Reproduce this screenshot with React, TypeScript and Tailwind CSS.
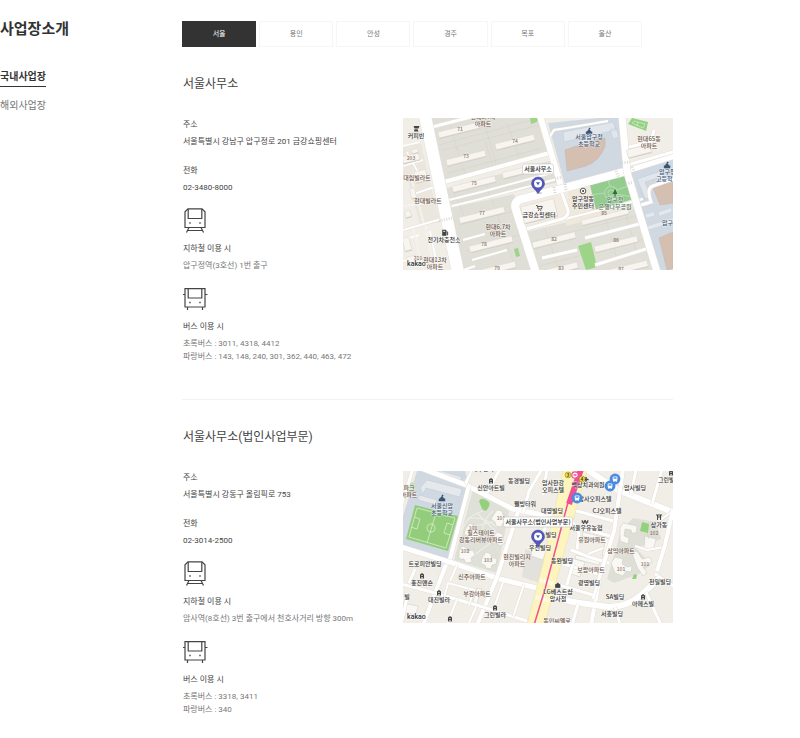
// src/pages/company/Location.tsx
import React from "react";

type Point = [x: number, y: number];

interface Office {
  id: string;
  name: string;
  address: string;
  tel: string;
  subway: string;
  bus: string[];
  map: React.ReactNode;
}

interface LabelProps {
  x: number;
  y: number;
  lines: string[];
  fill?: string;
  anchor?: "start" | "middle";
}

// Place name on a map, one <text> per line
const Label: React.FC<LabelProps> = ({
  x,
  y,
  lines,
  fill = "#333333",
  anchor = "middle",
}) => (
  <>
    {lines.map((line, index) => (
      <text
        key={index}
        x={x}
        y={y + 2 + index * 7}
        textAnchor={anchor}
        fill={fill}
        stroke="#ffffff"
        strokeWidth="1"
        strokeOpacity="0.6"
        paintOrder="stroke"
      >
        {line}
      </text>
    ))}
  </>
);

// Long apartment building, turned along the street grid
const Block: React.FC<{
  x: number;
  y: number;
  w?: number;
  h?: number;
  turn?: number;
}> = ({ x, y, w = 42, h = 6, turn = -14 }) => (
  <g transform={`rotate(${turn} ${x} ${y})`}>
    <rect x={x - w / 2} y={y - h / 2 + 1} width={w} height={h} fill="#cfccc3" />
    <rect
      x={x - w / 2}
      y={y - h / 2}
      width={w}
      height={h}
      rx="0.5"
      fill="#f8f5f0"
      stroke="#dcd9d1"
      strokeWidth="0.5"
    />
  </g>
);

const Road: React.FC<{ d: string; w?: number }> = ({ d, w = 4 }) => (
  <>
    <path d={d} fill="none" stroke="#e4e0d8" strokeWidth={w + 1} />
    <path d={d} fill="none" stroke="#ffffff" strokeWidth={w} />
  </>
);

const House: React.FC<{ at: Point; fill?: string }> = ({
  at: [x, y],
  fill = "#444444",
}) => (
  <g>
    <path d={`M${x - 2} ${y + 2.5}v-4l2 -1.500l2 1.500v4z`} fill={fill} />
    <path d={`M${x - 0.6} ${y + 2.5}v-1.500h1.200v1.500z`} fill="#ffffff" />
    <path d={`M${x - 1} ${y - 0.6}h2`} stroke="#ffffff" strokeWidth="0.6" />
  </g>
);

const School: React.FC<{ at: Point }> = ({ at: [x, y] }) => (
  <path
    d={`M${x} ${y - 3.5}l1.8 1l-1.300 1l1.400 1.500v.6h1.300v2.600h-6.400v-2.600h1.300v-.6l1.400 -1.500z`}
    fill="#3c5474"
  />
);

const Cart: React.FC<{ at: Point }> = ({ at: [x, y] }) => (
  <g stroke="#444444" fill="none" strokeWidth="0.9">
    <path d={`M${x - 3} ${y - 2.5}h1.200l1 3.500h3.200l.8 -2.600h-4.500`} />
    <path d={`M${x - 1} ${y + 2.5}h.9M${x + 1.3} ${y + 2.5}h.9`} />
  </g>
);

const BusStop: React.FC<{ at: Point }> = ({ at: [x, y] }) => (
  <g>
    <circle cx={x} cy={y} r="5.4" fill="#4a8be0" />
    <rect x={x - 2.3} y={y - 2.5} width="4.6" height="4.4" rx="0.8" fill="#fff" />
    <path d={`M${x - 1.5} ${y - 1}h3`} stroke="#4a8be0" strokeWidth="1.4" />
    <path
      d={`M${x - 1.6} ${y + 2.4}h1M${x + 0.6} ${y + 2.4}h1`}
      stroke="#fff"
      strokeWidth="1"
    />
  </g>
);

// Office marker with the name bubble above it
const Marker: React.FC<{ name: string; width: number }> = ({ name, width }) => (
  <g>
    <rect
      x={135 - width / 2}
      y="46"
      width={width}
      height="10"
      rx="2"
      fill="#ffffff"
      stroke="#c4c4c4"
      strokeWidth="0.6"
    />
    <text x="135" y="53.3" textAnchor="middle" fill="#222222">
      {name}
    </text>
    <ellipse cx="136" cy="75" rx="3" ry="1" fill="#000000" opacity="0.2" />
    <path
      d="M135 59a6.500 6.500 0 0 1 6.500 6.500c0 4-3.600 5.500-6.500 10c-2.900-4.500-6.500-6-6.500-10a6.500 6.500 0 0 1 6.500-6.500z"
      fill="#5158b8"
      stroke="#3d4399"
      strokeWidth="0.5"
    />
    <circle cx="135" cy="65.500" r="4" fill="#ffffff" />
    <path d="M133 64.300h4l-2 2.900z" fill="#5158b8" />
  </g>
);

const MapFrame: React.FC<{ title: string; children: React.ReactNode }> = ({
  title,
  children,
}) => (
  <svg
    viewBox="0 0 270 152"
    role="img"
    aria-label={title}
    className="block w-full font-['Noto_Sans_CJK_KR',sans-serif] text-[6px] font-medium"
  >
    <rect width="270" height="152" fill="#f1eee8" />
    {children}
    <text
      x="4"
      y="148"
      fill="#333333"
      stroke="#ffffff"
      strokeWidth="1"
      paintOrder="stroke"
      className="font-['Roboto',sans-serif] text-[7px] font-medium"
    >
      kakao
    </text>
  </svg>
);

const BROWN = "#6b5347";
const NAVY = "#3c5474";

const SeoulMap = () => (
  <MapFrame title="서울사무소 지도">
    {/* apartment grounds */}
    <path d="M29 0H137L149 34L35 66zM37 72L154 41L157 64L48 87z" fill="#dfdfd7" />
    <path d="M47 90L111 76L132 152H61z" fill="#dfdfd7" />
    <path d="M123 114L240 86L254 152H136z" fill="#e0e0d8" />
    <path d="M165 70L187 67L193 90L240 80V88L163 108z" fill="#efe8dc" />
    <path d="M112 82L160 72L166 98L120 110z" fill="#f1ebe1" />
    <path d="M0 28L18 25L24 52L0 58zM5 62L25 58L38 104L17 108z" fill="#ebe7df" />
    <g stroke="#cfcec6" strokeWidth="0.4" fill="none">
      <path d="M36 27l100 -27M46 2l8 30M80 0l13 46M104 5l12 34M54 30l8 26M82 23l8 25M40 32l96 -25M45 55l94 -25M52 76l9 22M83 68l8 19M56 107l55 -14M63 133l54 -16M92 91l18 52" />
      <path d="M128 124l108 -27M136 148l106 -27M142 111l14 41M202 98l12 43M222 93l13 46" />
    </g>
    <path
      d="M0 88l34 -4M0 61l22 -7M9 63l12 43M0 28l17 -4M0 48l20 -6M4 34l12 22M0 122l16 -5M10 109l10 43M22 105l9 47M27 113l8 39"
      stroke="#fff"
      strokeWidth="1.500"
      fill="none"
    />
    <path
      d="M0 88l34 -4M9 63l12 43M10 109l10 43M22 105l9 47"
      stroke="#d8d5cd"
      strokeWidth="0.4"
      fill="none"
    />

    {/* schools */}
    <path d="M145 5L216 -2L221 53L162 67z" fill="#d0d9e2" />
    <path d="M227 54L270 41V152H257z" fill="#d0d9e2" />
    <path
      d="M160 14l50 -10 3 8 -52 12zM207 12l6 -2 3 9 -6 2z"
      fill="#e0e6ec"
      stroke="#bcc8d3"
      strokeWidth="0.5"
    />
    <path
      d="M234 61l24 -8 3 5 -19 6 6 15 -6 2z"
      fill="#e0e6ec"
      stroke="#bcc8d3"
      strokeWidth="0.5"
    />
    <path
      d="M162 32L188 23L202 20V28Q197 43 183 48L164 53z"
      fill="#d5bfb1"
      stroke="#c6b5a9"
      strokeWidth="0.5"
    />
    <path
      d="M250 70L270 62V85L257 87zM256 120L270 114V150L264 152z"
      fill="#d5bfb1"
      stroke="#c6b5a9"
      strokeWidth="0.5"
    />
    <path
      d="M243 98l8 -2M245 110l25 -8M256 96l12 -4"
      stroke="#e4e9ee"
      strokeWidth="3"
    />

    {/* parks */}
    <path d="M187 67L224 57L231 81L193 92z" fill="#94cc90" />
    <g stroke="#b3dbad" strokeWidth="1" fill="none">
      <circle cx="208" cy="75" r="6.500" />
      <circle cx="208" cy="75" r="3" />
      <path d="M188 77l13 -2M214 72l14 -5M207 68l-2 -6M210 81l3 6M214 76l15 3" />
    </g>
    <path
      d="M175 128L188 124L194 149L183 152zM127 0H135L134 4L128 6zM111 131l4 -1 2 8 -4 1z"
      fill="#9dd487"
    />
    <path d="M225 6L229 0L245 4L243 13z" fill="#93d184" />
    <path
      d="M229 5l2 -2 11 3 -2 4zM235 4l-1 4"
      fill="none"
      stroke="#cfebc3"
      strokeWidth="0.8"
    />

    {/* streets */}
    <Road w={3} d="M29 9L76 -3" />
    <Road w={2} d="M0 112L38 101L45 104" />
    <Road w={2} d="M60 122L82 116M69 142L104 132M61 152L72 148M0 143L20 139" />
    <Road w={4} d="M34 66L150 34" />
    <Road w={2} d="M11 76L34 68M46 82L78 74L152 54" />
    <Road w={2} d="M49 88L78 81L154 61" />
    <Road w={2} d="M123 111L240 81" />
    <Road w={3} d="M182 120L240 105M192 147L246 130M139 140L174 132M152 153L174 146" />
    <Road w={3} d="M221 48L270 34M226 29L248 24L251 12" />
    <Road w={2} d="M149 29L146 20L151 12L170 9L205 3" />
    <Road w={3} d="M238 87L248 84Q243 70 250 68L270 61" />
    <Road w={3} d="M157 70L165 92Q166 98 159 101L123 111" />
    <Road w={6} d="M137 -2L158 68" />
    <Road w={8} d="M133 155L113 92Q110 84 118 81L157 71L224 53" />
    <Road w={5} d="M224 53L272 38" />
    <Road w={7} d="M219 -2L224 54L254 154" />
    <Road w={12} d="M22 -2L55 154" />
    <path
      d="M36 103l13 -3M213 53l3 7M229 49l3 7M219 45l8 -1M223 66l7 -2M151 69l1 6M162 66l1 6M152 61l7 -2"
      stroke="#dcd8d0"
      strokeWidth="3"
      strokeDasharray="1 1.500"
    />

    {/* buildings */}
    <Block x={56} y={12} />
    <Block x={112} y={24} w={40} />
    <Block x={63} y={40} w={40} />
    <Block x={71} y={66} w={44} />
    <Block x={118} y={53} w={38} />
    <Block x={79} y={97} w={46} />
    <Block x={88} y={126} w={44} />
    <Block x={93} y={151} w={40} />
    <Block x={8} y={40} w={17} h={7} />
    <Block x={12} y={33} w={6} h={4} />
    <Block x={18} y={58} w={12} h={11} />
    <Block x={10} y={75} w={5} h={10} />
    <Block x={5} y={96} w={6} h={6} />
    <Block x={4} y={126} w={7} h={13} />
    <Block x={9} y={142} w={9} h={8} />
    <Block x={202} y={99} w={48} h={5} />
    <Block x={151} y={122} w={44} />
    <Block x={213} y={126} w={44} />
    <Block x={158} y={151} w={34} />
    <Block x={225} y={150} w={40} />
    <Block x={236} y={33} w={24} h={8} />
    <Block x={136} y={93} w={34} h={17} />

    <Label x={80} y={-1} lines={["현대6,7차", "아파트"]} fill={BROWN} />
    <path d="M10.500 8h6l-1 2.500h-4zM11.500 11.200h3l1 2.300h-4.500z" fill="#444444" />
    <Label x={13} y={18} lines={["커피빈"]} />
    <Label x={14} y={60} lines={["대림빌라트"]} fill={BROWN} />
    <Label x={25} y={83} lines={["현대빌라트"]} fill={BROWN} />
    <path
      d="M39.500 112h3.500v5.500h-3.500zM43.500 113l1.200 1v3h-1"
      fill="#444444"
      stroke="#444444"
      strokeWidth="0.6"
    />
    <path d="M40.200 113.300h2" stroke="#ffffff" strokeWidth="0.9" />
    <Label x={41} y={122} lines={["전기차충전소"]} />
    <Label x={95} y={109} lines={["현대6,7차", "아파트"]} fill={BROWN} />
    <Label x={32} y={142} lines={["현대13차", "아파트"]} fill={BROWN} />
    <Cart at={[136, 90]} />
    <Label x={136} y={97} lines={["금강쇼핑센터"]} />
    <School at={[186, 13]} />
    <Label x={186} y={19} lines={["서울압구정", "초등학교"]} fill={NAVY} />
    <Label x={246} y={21} lines={["현대65동", "아파트"]} fill={BROWN} />
    <School at={[264, 47]} />
    <Label x={256} y={54} lines={["압구정"]} fill={NAVY} anchor="start" />
    <Label x={253} y={61} lines={["고등학교"]} fill={NAVY} anchor="start" />
    <Label x={259} y={105} lines={["압구정"]} fill={NAVY} anchor="start" />
    <circle cx="180" cy="73" r="2.800" fill="#fff" stroke="#333333" strokeWidth="0.8" />
    <circle cx="180" cy="73" r="1" fill="#333333" />
    <Label x={180} y={81} lines={["압구정동", "주민센터"]} />
    <path d="M212 71l2.500 5h-2v2.500h-1v-2.500h-2z" fill="#2f6b3c" />
    <Label x={212} y={82} lines={["압구정", "은행나무공원"]} fill="#56745a" />
    <g fill="#8a7468" fontSize="5" textAnchor="middle">
      <text x="57" y="13">71</text>
      <text x="112" y="25">74</text>
      <text x="63" y="40">73</text>
      <text x="8" y="42">203</text>
      <text x="71" y="67">75</text>
      <text x="79" y="97">77</text>
      <text x="81" y="128">78</text>
      <text x="94" y="152">79</text>
      <text x="15" y="142">210</text>
      <text x="201" y="97">85</text>
      <text x="151" y="123">82</text>
      <text x="213" y="124">86</text>
      <text x="158" y="152">83</text>
      <text x="218" y="153">87</text>
    </g>
    <Marker name="서울사무소" width={31} />
  </MapFrame>
);

const GangdongMap = () => (
  <MapFrame title="서울사무소(법인사업부문) 지도">
    {/* school grounds */}
    <path d="M14 0H62L66 14L47 88L0 76V45z" fill="#d0d9e2" />
    <path
      d="M17 17l7 -8 35 9 -2 8 -34 -9 -3 6zM22 2l34 10 3 -6 -20 -6h-14zM16 24l18 5 -1 5 -18 -5z"
      fill="#e6e9ec"
      stroke="#bcc8d3"
      strokeWidth="0.5"
    />
    <path d="M12 34L55 45L45 80L3 68z" fill="#93cd7c" />
    <path
      d="M14 37L52 47L43 77L6 66zM33 42l-9 30M11 46l6 2 -3 10 -6 -2M50 54l-6 -2 -3 10 6 2"
      fill="none"
      stroke="#dff3d4"
      strokeWidth="0.7"
    />
    <circle cx="28" cy="57" r="4" fill="none" stroke="#dff3d4" strokeWidth="0.700" />

    {/* apartment grounds */}
    <path d="M70 18L106 40L94 102L51 89z" fill="#dfe0d8" />
    <path d="M230 47L253 51L258 68L233 77L248 93L236 103L211 112L204 108L218 60z" fill="#dfdfd8" />
    <path d="M122 78L143 84L137 112L119 106z" fill="#e2e1db" />
    <path
      d="M76 30q2 -4 7 -1q6 3 2 8q-2 5 -6 1zM239 51l7 2 -1 9 -8 -2zM231 103l3 1 -1 4 -4 0z"
      fill="#93d17c"
    />
    <path d="M2 14l8 -3 3 5 -6 8z" fill="#c5e0b5" />
    <path
      d="M74 42l22 22M80 40q-22 6 -22 30M90 40q-14 12 -10 30M72 55l26 -6M70 85l24 -18M64 48q14 -4 30 8"
      stroke="#eeeee8"
      strokeWidth="1.200"
      fill="none"
    />
    <g fill="#faf8f5" stroke="#cbc8bf" strokeWidth="0.500" strokeLinejoin="round">
      <path d="M91 43l3 -4 5 1 1 4 5 2 -1 5 -4 1 -2 4 -5 -1 -1 -4 -4 -3z" />
      <path d="M63 57l4 -5 4 3 -1 4 7 1 1 5 -5 2 -3 4 -6 -2 1 -4 -4 -2z" />
      <path d="M56 80l3 -5 5 2 0 3 6 -1 2 5 -4 3 1 4 -6 1 -2 -4 -5 0z" />
      <path d="M79 87l4 -6 5 2 0 3 6 2 -1 5 -4 1 -1 4 -5 -1 -1 -3 -4 -1z" />
      <path d="M89 66l6 -5 5 3 -1 4 3 4 -5 3 -3 -3 -4 1z" />
      <path d="M217 57l3 -5 14 3 -1 7 -4 0 -1 -3 -6 -1 -1 7 5 2 -1 6 -8 -3z" />
      <path d="M180 61l27 7 -4 18 -4 -1 3 -14 -23 -6zM173 84l24 6 -1 4 -24 -6zM208 92l4 -6 8 2 -1 5 5 3 5 -1 -1 6 -5 -1 -3 5 -8 -3z" />
      <path d="M229 82l5 -2 5 8 8 -2 2 5 -9 5 4 6 -4 3 -6 -9zM242 65l11 3 -3 12 -9 -2z" />
      <path d="M168 87l14 4 -5 15 -11 -4zM130 72l14 5 -4 12 -12 -4zM74 117l5 1 -6 17 -4 -1z" />
      <path d="M0 132l15 3 -2 9 -13 -3zM56 103l8 1 -1 5 -8 -2zM244 62l2 6" />
    </g>

    {/* streets */}
    <Road w={5} d="M20 -2L63 14L110 38L160 48" />
    <Road w={4} d="M66 14L47 88L42 96L20 154" />
    <Road w={5} d="M-2 76L50 92L97 108L138 118" />
    <Road w={4} d="M115 41L94 106L74 154" />
    <Road w={3} d="M-2 113L25 120L80 136L124 150" />
    <Road w={3} d="M12 98L6 112M5 122L-1 150" />
    <Road w={2} d="M41 127L45 112L71 119L66 134M54 94L47 110" />
    <Road w={2} d="M121 113L110 146M67 3L62 12M69 -2L63 14" />
    <Road w={3} d="M97 -2L84 22M139 -2L126 20L120 42" />
    <Road w={2} d="M54 128L44 154M73 136L65 154M100 111L91 137" />
    <Road w={3} d="M-2 35L10 -2" />
    <Road w={6} d="M183 -2L215 19L272 42" />
    <Road w={3} d="M170 39L185 43L214 51M168 48L176 62L174 78M177 57L211 66" />
    <Road w={3} d="M168 79L186 86L206 92M160 93L199 104" />
    <Road w={4} d="M220 -2L211 60L197 104L188 154" />
    <Road w={3} d="M170 92L160 128M197 104L190 128M144 -2L140 24" />
    <Road w={2} d="M200 77l-15 6M232 75l12 4 17 -3M256 50l12 -9" />
    <Road w={4} d="M270 38L262 74L254 100" />
    <Road w={3} d="M252 103L272 116M156 114L190 124" />
    <Road w={6} d="M138 122L170 131L206 136Q224 136 238 124L258 106" />
    <Road w={3} d="M243 121L258 154M212 136L217 154M175 133L169 154" />
    <Road w={3} d="M233 -2L228 24M259 -2L249 33M148 42L141 60" />

    {/* main road and subway line 8 */}
    <path
      d="M160 -1H184L157 96L142 153H124L140 92z"
      fill="#fdf5bd"
      stroke="#e8dfaa"
      strokeWidth="0.500"
    />
    <path
      d="M133 126l14 4M137 109l14 4M156 51l14 4"
      stroke="#ffffff"
      strokeWidth="4"
      strokeDasharray="1 1"
    />
    <path d="M176 -2L164 35L142 118L131 154" fill="none" stroke="#f04f97" strokeWidth="1.500" />
    <path d="M178 -2L166 33" stroke="#f04f97" strokeWidth="6" />

    <Label x={6} y={17} lines={["파크", "아파트"]} fill={BROWN} />
    <School at={[39, 27]} />
    <Label x={39} y={35} lines={["서울신암", "초등학교"]} fill={NAVY} />
    <Label x={80} y={-2} lines={["대우빌라"]} />
    <House at={[88, 10]} />
    <Label x={88} y={17} lines={["신안아트빌"]} />
    <Label x={116} y={10} lines={["동경빌딩"]} />
    <Label x={122} y={33} lines={["웰빙타워"]} />
    <g fill="#8a7468" fontSize="5" textAnchor="middle">
      <text x="98" y="49">101</text>
      <text x="70" y="59">101</text>
      <text x="62" y="82">102</text>
      <text x="85" y="91">103</text>
      <text x="251" y="64">102</text>
      <text x="218" y="100">101</text>
      <text x="242" y="95">101</text>
    </g>
    <Label x={78} y={62} lines={["힐스테이트", "강동리버뷰아파트"]} fill={BROWN} />
    <Label x={114} y={86} lines={["현진빌리지", "아파트"]} fill={BROWN} />
    <Label x={22} y={93} lines={["트로피안빌딩"]} />
    <Label x={69} y={106} lines={["신주아파트"]} fill={BROWN} />
    <House at={[19, 105]} />
    <Label x={19} y={112} lines={["홍진맨숀"]} />
    <Label x={74} y={123} lines={["부강아파트"]} fill={BROWN} />
    <House at={[36, 122]} />
    <Label x={36} y={129} lines={["대진빌라"]} />
    <Label x={4} y={126} lines={["빌"]} />
    <House at={[92, 137]} />
    <Label x={92} y={144} lines={["그린빌라"]} />
    <House at={[47, 148]} />
    <Label x={150} y={12} lines={["암사한강", "오피스텔"]} />
    <path d="M183 6v5M180.500 8.500h5" stroke="#444444" strokeWidth="1.400" />
    <Label x={185} y={14} lines={["백상치과의원"]} />
    <Label x={232} y={17} lines={["암사빌딩"]} />
    <House at={[268, 2]} />
    <Label x={255} y={9} lines={["그린빌라"]} anchor="start" />
    <Label x={192} y={28} lines={["암사오피스텔"]} />
    <Label x={149} y={40} lines={["대명빌딩"]} />
    <Label x={204} y={40} lines={["CJ오피스텔"]} />
    <path
      d="M179 49l1.500 4 1.500 -4 1.500 4 1.500 -4M178.500 51h7"
      fill="none"
      stroke="#444444"
      strokeWidth="0.900"
    />
    <Label x={183} y={57} lines={["서울우유농협"]} />
    <Label x={189} y={69} lines={["유원아파트"]} fill={BROWN} />
    <path
      d="M253 44h6M254 46h4M254.500 44v5M257.500 44v5"
      stroke="#444444"
      strokeWidth="1"
    />
    <Label x={256} y={54} lines={["상가동"]} />
    <Label x={218} y={80} lines={["삼익아파트"]} fill={BROWN} />
    <Label x={159} y={90} lines={["동완빌딩"]} />
    <Label x={188} y={99} lines={["보람아파트"]} fill={BROWN} />
    <Label x={186} y={112} lines={["광명빌딩"]} />
    <path
      d="M152.500 113.500h4.500v3h-4.500zM153.300 113.500q1.500 -3 3 0"
      fill="#444444"
      stroke="#444444"
      strokeWidth="0.700"
    />
    <Label x={155} y={121} lines={["LG베스트샵", "암사점"]} />
    <Label x={212} y={126} lines={["SA빌딩"]} />
    <House at={[240, 126]} />
    <Label x={240} y={133} lines={["아메스빌"]} />
    <Label x={209} y={143} lines={["서흥빌딩"]} />
    <Label x={257} y={111} lines={["천일빌딩"]} />
    <Label x={154} y={150} lines={["동인씨엘로"]} fill={BROWN} />
    <Label x={148} y={64} lines={["빌딩"]} />
    <Label x={137} y={77} lines={["우전빌딩"]} />
    <BusStop at={[174, 27]} />
    <BusStop at={[207, 15]} />
    <BusStop at={[212, 8]} />
    <circle cx="172" cy="4" r="3.200" fill="#ffffff" stroke="#f04f97" strokeWidth="1.200" />
    <path d="M170.500 4h3" stroke="#f04f97" strokeWidth="1.500" />
    <circle cx="165" cy="4" r="3" fill="#f0dc3c" stroke="#8a7a20" strokeWidth="0.500" />
    <circle cx="179" cy="8" r="3" fill="#f0dc3c" stroke="#8a7a20" strokeWidth="0.500" />
    <g fill="#333333" fontSize="5" textAnchor="middle">
      <text x="165" y="6">3</text>
      <text x="179" y="10">4</text>
    </g>
    <Marker name="서울사무소(법인사업부문)" width={69} />
  </MapFrame>
);

const SubwayIcon = () => (
  <svg
    viewBox="0 0 26 25"
    fill="none"
    stroke="#444444"
    strokeWidth="1.2"
    aria-hidden="true"
    className="mt-3.5 block h-[25px] w-[26px]"
  >
    <path d="M5 .8h14l3 3V19.500H2V3.800z" />
    <path d="M5.200 1v9.500h13.600V1" />
    <path d="M6 19.500l-2.500 5M18 19.500l2.500 5M5 22.500h14" />
    <path d="M6.300 15h1.400M16.300 15h1.400" strokeWidth="1.500" />
  </svg>
);

const BusIcon = () => (
  <svg
    viewBox="0 0 26 25"
    fill="none"
    stroke="#444444"
    strokeWidth="1.200"
    aria-hidden="true"
    className="mt-3.5 block h-[25px] w-[26px]"
  >
    <path d="M2 2.600h20V21H2z" />
    <path d="M5.200 3v9h13.600V3" />
    <path d="M2 8.500H-.5M22 8.500h2.500M4.500 21v3M19.500 21v3" />
    <path d="M6.300 16.500h1.400M16.300 16.500h1.400" strokeWidth="1.500" />
  </svg>
);

const regions = ["서울", "용인", "안성", "경주", "목포", "울산"];

const offices: Office[] = [
  {
    id: "seoul",
    name: "서울사무소",
    address: "서울특별시 강남구 압구정로 201 금강쇼핑센터",
    tel: "02-3480-8000",
    subway: "압구정역(3호선) 1번 출구",
    bus: [
      "초록버스 : 3011, 4318, 4412",
      "파랑버스 : 143, 148, 240, 301, 362, 440, 463, 472",
    ],
    map: <SeoulMap />,
  },
  {
    id: "seoul-corporate",
    name: "서울사무소(법인사업부문)",
    address: "서울특별시 강동구 올림픽로 753",
    tel: "02-3014-2500",
    subway: "암사역(8호선) 3번 출구에서 천호사거리 방향 300m",
    bus: ["초록버스 : 3318, 3411", "파랑버스 : 340"],
    map: <GangdongMap />,
  },
];

const OfficeSection: React.FC<{ office: Office }> = ({ office }) => (
  <section className="border-t border-[#f2f2f2] pt-7 pb-9 first:border-t-0">
    <h2 className="pl-px text-xs leading-[18px] text-[#444444]">
      {office.name}
    </h2>
    <div className="mt-[25px] flex items-start">
      <div className="w-[45%] shrink-0 pl-px text-[8px] leading-[13px] whitespace-nowrap text-[#444444]">
        <h3>주소</h3>
        <p className="mt-1">{office.address}</p>
        <h3 className="mt-4">전화</h3>
        <p className="mt-1">{office.tel}</p>
        <SubwayIcon />
        <h3 className="mt-[9px]">지하철 이용 시</h3>
        <p className="mt-1 text-[#777777]">{office.subway}</p>
        <BusIcon />
        <h3 className="mt-[9px]">버스 이용 시</h3>
        <ul className="mt-1 text-[#777777]">
          {office.bus.map((line) => (
            <li key={line}>{line}</li>
          ))}
        </ul>
      </div>
      <div className="min-w-0 flex-1">{office.map}</div>
    </div>
  </section>
);

const App: React.FC = () => {
  return (
    <div className="flex bg-white font-['Roboto','Noto_Sans_CJK_KR',sans-serif]">
      <aside className="w-[182px] shrink-0 pt-[18px]">
        <h1 className="text-[15px] leading-[22px] font-bold text-[#333333]">
          사업장소개
        </h1>
        <nav className="mt-[29px] flex flex-col items-start text-[10px] leading-4">
          <a
            href="#domestic"
            className="border-b border-[#333333] pb-px font-bold text-[#333333]"
          >
            국내사업장
          </a>
          <a href="#overseas" className="mt-[11px] text-[#777777]">
            해외사업장
          </a>
        </nav>
      </aside>

      <main className="mr-[127px] min-w-0 flex-1 pt-[21px]">
        <div className="mr-[31px] grid grid-cols-6 gap-[3px]">
          {regions.map((region, index) => (
            <button
              key={region}
              type="button"
              className={`h-[26px] border text-[7px] ${
                index === 0
                  ? "border-[#333333] bg-[#333333] text-white"
                  : "border-[#f6f6f6] bg-white text-[#777777]"
              }`}
            >
              {region}
            </button>
          ))}
        </div>
        {/* office list of the selected region */}
        <div>
          {offices.map((office) => (
            <OfficeSection key={office.id} office={office} />
          ))}
        </div>
      </main>
    </div>
  );
};

export default App;
